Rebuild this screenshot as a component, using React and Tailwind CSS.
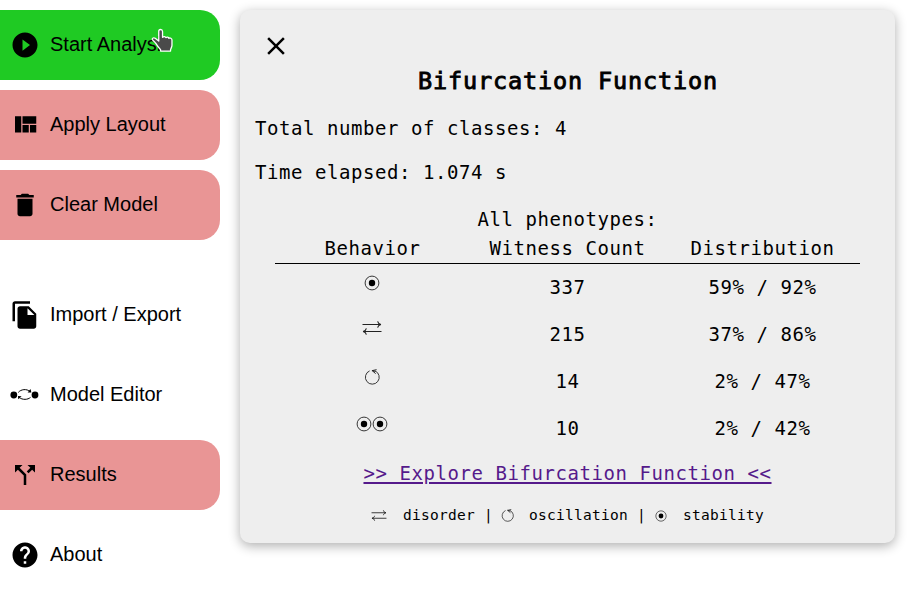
import React from "react";

const MONO = "font-['DejaVu_Sans_Mono',monospace]";

const paths = {
  play: "M12 2C6.48 2 2 6.48 2 12s4.48 10 10 10 10-4.48 10-10S17.52 2 12 2zm-2 14.5v-9l6 4.5-6 4.5z",
  layout: "M10 18h5v-6h-5v6zm-6 0h5V5H4v13zm12 0h5v-6h-5v6zM10 5v6h11V5H10z",
  trash: "M6 19c0 1.1.9 2 2 2h8c1.1 0 2-.9 2-2V7H6v12zM19 4h-3.5l-1-1h-5l-1 1H5v2h14V4z",
  files: "M16 1H4c-1.1 0-2 .9-2 2v14h2V3h12V1zm-1 4l6 6v10c0 1.1-.9 2-2 2H7.99C6.89 23 6 22.1 6 21l.01-14c0-1.1.89-2 1.99-2h7zm-1 7h5.5L14 6.5V12z",
  split: "M14 4l2.29 2.29-2.88 2.88 1.42 1.42 2.88-2.88L20 10V4zm-4 0H4v6l2.29-2.29 4.71 4.7V20h2v-8.41l-5.29-5.3z",
  help: "M12 2C6.48 2 2 6.48 2 12s4.48 10 10 10 10-4.48 10-10S17.52 2 12 2zm1 17h-2v-2h2v2zm2.07-7.75l-.9.92C13.45 12.9 13 13.5 13 15h-2v-.5c0-1.1.45-2.1 1.17-2.83l1.24-1.26c.37-.36.59-.86.59-1.41 0-1.1-.9-2-2-2s-2 .9-2 2H8c0-2.21 1.79-4 4-4s4 1.79 4 4c0 .88-.36 1.68-.93 2.25z",
  close: "M19 6.41L17.59 5 12 10.59 6.41 5 5 6.41 10.59 12 5 17.59 6.41 19 12 13.41 17.59 19 19 17.59 13.41 12z",
};

function Icon({ name }) {
  if (name === "model") {
    return (
      <svg viewBox="0 0 30 30" className="size-[30px] shrink-0">
        <circle cx="3.8" cy="15" r="3.4" />
        <circle cx="25" cy="15" r="3.4" />
        <path d="M8.3 12.4C11 9.2 16.5 8.5 20.3 11.6M20.5 17.4C17.8 19.8 12.5 20.2 9 17.3" fill="none" stroke="#000" strokeWidth="1" />
        <path d="M17.6 12.4l3.8.2-.9-3.6zM11.6 16.2l-3.6-.2.2 3.3z" />
      </svg>
    );
  }
  return (
    <svg viewBox="0 0 24 24" className="size-[30px] shrink-0">
      <path d={paths[name]} />
    </svg>
  );
}

function Stability({ size }) {
  return (
    <svg viewBox="0 0 16 16" width={size} height={size}>
      <circle cx="8" cy="8" r="6.9" fill="none" stroke="#222" strokeWidth="0.9" />
      <circle cx="8" cy="8" r="3.2" />
    </svg>
  );
}

function Oscillation({ size }) {
  return (
    <svg viewBox="0 0 16 16" width={size} height={size} fill="none" stroke="#222">
      <path d="M5.6 1.9A6.9 6.9 0 1 0 11 1.9" strokeWidth="0.9" />
      <path d="M7.9 1.7l4.7-1M8.3 1.7l3.3 2.9M8.2 1.7l3.2.7" strokeWidth="1" />
    </svg>
  );
}

function Disorder({ width, height }) {
  return (
    <svg viewBox="0 0 20 14" width={width} height={height} fill="none" stroke="#222" strokeWidth="1.1">
      <path d="M.5 3.5h18M15.6.4c.4 1.7 1.3 2.6 3.3 3.1-2 .5-2.9 1.4-3.3 3.1" />
      <path d="M19.500 10.5H1M4.4 7.4C4 9.1 3.1 10 1.1 10.5c2 .5 2.9 1.4 3.3 3.1" />
    </svg>
  );
}

function MenuItem({ icon, label, tone = "" }) {
  return (
    <button className={"flex h-[70px] w-[220px] shrink-0 items-center gap-2.5 rounded-r-[20px] pl-2.5 text-left text-[20px] " + tone}>
      <Icon name={icon} />
      <span className="relative -top-px whitespace-nowrap">{label}</span>
    </button>
  );
}

function HandCursor() {
  return (
    <svg viewBox="0 0 22 24" className="absolute left-[150px] top-[28px] h-[26px] w-[24px]">
      <path
        d="M8 3.2C8 .8 11.3.8 11.5 3.2V8.6c1-1 2.6-.8 3 .3 1-.8 2.5-.5 2.8.6 1.1-.6 2.9 0 2.9 1.6V16c0 1.6-.9 2.6-1.3 4v1.3H9.7V20c-1.5-1.5-3.3-4-4.4-5.8-.8-1.2-2.6-2.5-3.2-3.6-.4-1.2 1.3-2 2.6-1.2L8 12z"
        fill="#4a4a4a"
        stroke="#fff"
        strokeWidth="1.2"
        strokeLinejoin="round"
      />
    </svg>
  );
}

const rows = [
  { glyph: <Stability size={16} />, pad: "pt-[11px]", count: "337", dist: "59% / 92%" },
  { glyph: <Disorder width={20} height={14} />, pad: "pt-[10px]", count: "215", dist: "37% / 86%" },
  { glyph: <Oscillation size={16} />, pad: "pt-[11px]", count: "14", dist: "2% / 47%" },
  { glyph: <><Stability size={16} /><Stability size={16} /></>, pad: "pt-[11px] gap-[0.5px]", count: "10", dist: "2% / 42%" },
];

export default function App() {
  return (
    <div className="relative flex h-[589px] w-[910px] overflow-hidden bg-white pt-2.5 font-['Liberation_Sans',Arial,sans-serif] text-black">
      <nav className="flex w-[220px] shrink-0 flex-col gap-2.5">
        <MenuItem icon="play" label="Start Analysis" tone="bg-[#1fca23]" />
        <MenuItem icon="layout" label="Apply Layout" tone="bg-[#e99595]" />
        <MenuItem icon="trash" label="Clear Model" tone="bg-[#e99595]" />
        <div className="h-5 shrink-0" />
        <MenuItem icon="files" label="Import / Export" />
        <MenuItem icon="model" label="Model Editor" />
        <MenuItem icon="split" label="Results" tone="bg-[#e99595]" />
        <MenuItem icon="help" label="About" />
      </nav>

      <main className={"ml-5 flex h-[533px] w-[655px] flex-col rounded-[10px] bg-[#eeeeee] shadow-[0_3px_12px_rgba(0,0,0,0.32)] text-[19px] tracking-[0.562px] " + MONO}>
        <button className="ml-[21px] mt-[21px] size-[30px]"><Icon name="close" /></button>
        <h2 className="mt-px h-[38px] pl-px text-center text-[23.5px] font-normal leading-[38px] tracking-[0.852px] [-webkit-text-stroke:0.9px_#000]">Bifurcation Function</h2>
        <p className="mt-[17px] h-[22px] pl-[15px] leading-[22px]">Total number of classes: 4</p>
        <p className="mt-[22px] h-[22px] pl-[15px] leading-[22px]">Time elapsed: 1.074 s</p>

        <p className="mt-[25px] h-[22px] text-center leading-[22px]">All phenotypes:</p>
        <div className="mx-[35px] mt-[7px] grid h-[27px] grid-cols-3 border-b border-black text-center leading-[22px]">
          <span>Behavior</span>
          <span>Witness Count</span>
          <span>Distribution</span>
        </div>
        <div className="mx-[35px]">
          {rows.map((r) => (
            <div key={r.count} className="grid h-[47px] grid-cols-3 text-center leading-[47px]">
              <span className={"flex items-start justify-center pr-px " + r.pad}>{r.glyph}</span>
              <span>{r.count}</span>
              <span>{r.dist}</span>
            </div>
          ))}
        </div>
        <a className="mt-[10px] h-[22px] text-center leading-[22px] text-[#551a8b] underline decoration-2 underline-offset-[2px]">
          {">> Explore Bifurcation Function <<"}
        </a>
        <div className="mt-[21px] flex h-5 items-center pl-[131px] text-[14.5px] leading-5 tracking-[0.27px]">
          <span className="w-[32px]"><Disorder width={16} height={11} /></span>
          <span className="w-[81px]">disorder</span>
          <span className="w-[17px]">|</span>
          <span className="w-[28px] pt-px"><Oscillation size={13} /></span>
          <span className="w-[108px]">oscillation</span>
          <span className="w-[18px]">|</span>
          <span className="w-[28px] pt-px"><Stability size={12} /></span>
          <span>stability</span>
        </div>
      </main>
      <HandCursor />
    </div>
  );
}
